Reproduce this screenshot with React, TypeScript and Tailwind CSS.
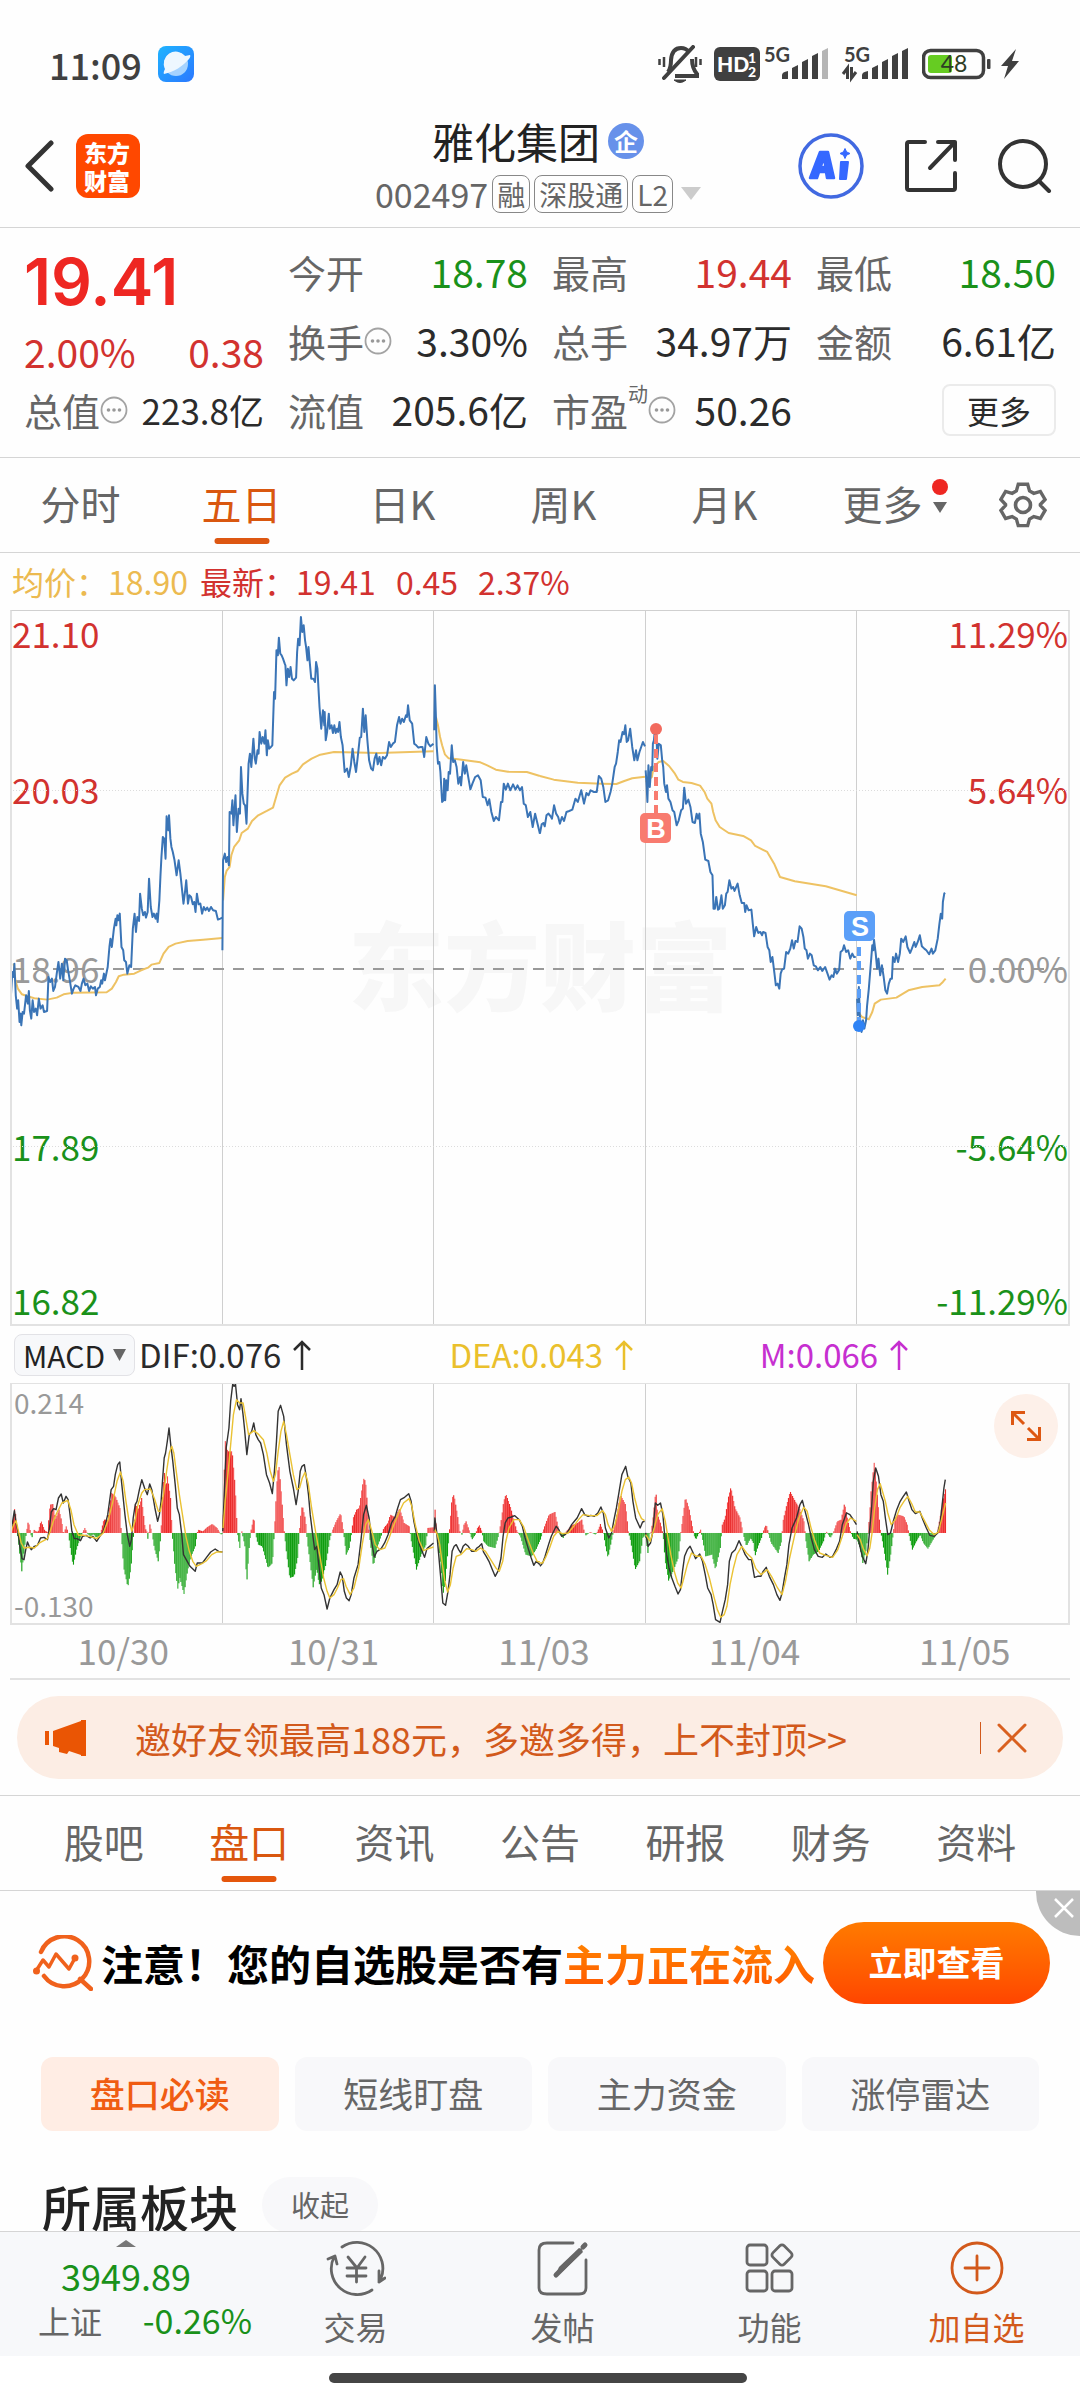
import { useState } from 'react';
import type { ReactNode } from 'react';
import { clsx } from 'clsx';

/* ---------- chart data ---------- */

// Plot units: three per pixel vertically, 3072 across the five sessions.
// The "late" sets start in the second half of the plot.
const LATE_OFFSET = 1568;
const PLOT_SCALE = 'scale(0.3444 0.3333)';

const PRICE_EARLY = [
  '32,1185 36,1115 40,1130 42,1090 46,1185 50,1225 53,1200 57,1265 60,1240 62,1275 66,1235 70,1240 76,1185 81,1210 84,1172 87,1230 91,1255 95,1200 99,1235 104,1225 108,1245 113,1195 118,1225 124,1215 128,1235 137,1232 141,1130 146,1145 151,1135 155,1172 160,1160 165,1120 170,1085 175,1135 180,1090 184,1140 189,1075 194,1080 198,1110 203,1140 209,1180 214,1165 219,1155 228,1160 234,1172 238,1150 243,1135 248,1155 254,1150 259,1172 264,1158 270,1165 276,1160 279,1185 284,1165 290,1160 294,1140 297,1150 302,1120 305,1140 313,1100 318,1040 321,1015 325,1040 331,985 336,955 338,975 341,945 344,960 348,940 353,1040 358,1050 361,1080 366,1085 370,1120 376,1095 381,1100 386,985 391,940 395,995 399,950 404,962 407,880 412,925 416,945 421,935 424,952 429,935 433,835 438,920 443,950 447,940 452,955 455,940 458,965 463,900 466,830 469,770 473,710 477,715 481,775 484,648 489,690 491,645 495,715 498,740 502,755 507,780 513,825 519,780 524,820 528,860 533,910 538,870 541,840 546,910 550,885 555,890 560,912 564,905 568,935 572,880 577,912 582,910 587,940 592,920 597,930 602,922 607,932 613,920 619,930 627,932 633,958 640,955 646,952',
  '646,1050 648,780 653,760 657,785 661,770 665,795 667,635 672,640 675,600 678,675 684,585 688,695 693,625 697,640 700,500 704,580 708,610 712,615 716,670 722,490 726,460 730,500 736,415 740,475 743,490 748,450 751,460 754,395 759,430 763,410 768,430 771,390 775,465 778,420 782,445 787,440 791,435 796,275 799,295 803,150 807,165 810,112 814,160 818,165 822,175 827,190 829,195 832,255 836,205 840,230 844,200 848,235 853,240 860,232 863,155 866,115 870,135 874,50 878,95 882,75 886,120 889,140 893,180 896,140 900,190 904,235 910,235 915,245 918,185 922,205 925,265 928,320 933,385 938,330 942,375 943,335 946,420 950,395 955,340 958,385 963,375 967,398 971,375 975,398 979,385 982,395 986,365 990,410 995,435 1001,515 1008,505 1013,530 1019,495 1024,445 1029,485 1034,515 1039,470 1045,412 1049,410 1054,325 1058,395 1062,345 1067,420 1072,480 1078,505 1083,510 1088,475 1093,460 1097,492 1102,470 1107,495 1112,470 1118,475 1124,465 1130,425 1135,440 1141,430 1147,425 1153,375 1159,350 1163,370 1168,355 1173,365 1179,345 1182,350 1185,315 1190,360 1197,370 1203,430 1209,435 1215,442 1222,440 1227,440 1232,470 1238,410 1244,430 1250,438 1259,430',
  '1261,390 1263,255 1266,350 1268,435 1272,490 1276,485 1279,515 1284,605 1288,600 1290,535 1293,600 1296,540 1300,570 1303,515 1307,520 1312,435 1316,485 1321,480 1326,500 1331,550 1336,530 1339,555 1345,485 1350,520 1354,495 1359,525 1366,567 1372,550 1380,530 1388,525 1396,540 1402,590 1410,592 1416,615 1421,597 1427,635 1434,662 1440,650 1449,660 1455,605 1459,605 1463,550 1469,568 1475,550 1482,570 1490,552 1497,568 1503,555 1510,570 1516,560 1521,610 1527,615 1533,650 1540,635 1547,680 1554,640 1561,670 1568,700',
];
const PRICE_LATE = [
  '0,700 5,672 10,668 14,678 19,645 25,640 31,648 35,655 41,615 47,640 53,650 58,670 64,650 70,662 77,635 85,632 94,628 103,595 110,605 120,570 128,610 135,578 141,585 147,570 157,575 165,575 171,527 178,535 184,560 190,605 198,600 205,575 210,550 217,500 221,490 226,455 230,420 234,425 240,395 244,402 248,375 252,425 256,420 262,385 268,440 274,480 279,450 283,480 289,455 294,440 299,425 305,438',
  '307,510 310,560 312,605 315,495 319,560 323,500 326,510 328,430 331,420 334,385 338,400 341,475 345,430 351,435 355,480 358,500 361,550 366,575 369,555 373,595 379,605 385,630 390,635 397,675 403,660 410,630 415,625 419,562 424,610 431,598 437,620 443,665 450,668 455,640 459,655 463,640 467,700 473,725 480,778 489,782 495,815 501,825 504,925 508,925 512,890 517,928 521,925 527,885 531,925 537,915 541,880 545,875 550,840 556,865 561,860 565,872 574,850 580,885 586,908 593,908 596,935 600,915 606,930 614,928 618,970 622,1008 628,980 634,998 640,995 645,1005 648,995 655,998 661,1040 666,1050 670,1085 675,1070 681,1120 685,1155 690,1150 695,1165 699,1120 703,1108 709,1105 715,1055 721,1060 727,1045 732,1020 737,1045 742,1022 748,1025 754,978 760,985 765,1010 769,1045 774,1050 778,1075 784,1060 789,1065 795,1095 801,1098 807,1110 814,1100 820,1112 828,1100 835,1120 841,1138 847,1125 852,1130 857,1105 862,1120 869,1108 873,1055 879,1050 883,1035 889,1055 895,1050 901,1075 907,1060 912,1070 917,1070',
  '921,1195 923,1245 926,1160 929,1250 934,1295 938,1260 942,1285 947,1260 950,1215 955,1165 960,1100 965,1035 968,1050 970,1018 975,1060 979,1105 983,1075 988,1125 993,1095 998,1130 1003,1170 1008,1180 1013,1150 1018,1135 1022,1135 1025,1070 1030,1085 1034,1060 1040,1085 1045,1060 1049,1015 1055,1025 1062,1008 1067,1040 1075,1058 1080,1045 1087,1025 1091,1040 1097,1025 1103,1005 1109,1038 1116,1045 1122,1050 1130,1062 1137,1045 1141,1060 1148,1050 1155,1015 1160,970 1164,940 1168,955 1170,905 1174,880 1176,877',
];
const AVERAGE_EARLY = [
  '40,1090 45,1140 52,1165 64,1182 80,1188 100,1194 137,1198 165,1192 185,1182 215,1177 310,1176 325,1165 337,1145 345,1128 360,1123 390,1120 410,1110 430,1102 440,1093 463,1088 475,1060 490,1040 510,1030 545,1022 590,1018 646,1013',
  '648,900 653,830 658,812 667,800 672,765 680,740 695,720 702,698 720,685 732,662 750,645 775,632 793,622 802,590 812,555 828,532 848,520 865,512 880,492 905,475 930,463 970,455 1100,458 1259,453',
  '1266,350 1272,375 1278,410 1284,435 1292,462 1303,474 1330,477 1395,486 1415,495 1440,508 1475,514 1530,515 1568,527',
];
const AVERAGE_LATE = [
  '0,527 40,538 110,547 180,550 222,551 245,542 268,534 305,529',
  '307,545 325,530 330,500 345,485 358,482 375,497 392,520 402,538 415,545 440,548 465,556 478,575 486,595 498,610 503,635 510,660 522,680 548,698 590,707 613,720 625,737 660,755 680,790 697,830 740,843 830,858 880,873 920,885',
  '923,1235 935,1250 955,1257 965,1235 972,1210 990,1198 1035,1192 1070,1170 1110,1160 1160,1155 1170,1145 1178,1135',
];

const MACD_ZERO = 695;
const HIST_EARLY =
  '32,695 42,615 49,695 62,810 75,695 81,658 87,692 91,712 97,685 103,690 109,692 118,658 129,688 137,692 144,610 153,608 160,655 170,625 178,660 183,700 191,675 197,695 203,740 211,795 222,740 236,700 245,680 253,698 262,705 270,698 276,708 288,705 292,690 300,655 312,655 323,575 334,585 347,620 351,700 358,800 370,858 379,800 385,720 388,680 391,605 400,625 410,590 420,680 425,690 429,720 433,665 440,695 447,740 458,780 466,700 471,560 476,515 480,560 485,525 494,590 499,700 507,800 515,862 521,830 533,878 543,810 552,770 566,735 573,685 588,690 600,678 615,668 629,680 640,700 646,695 647,640 652,415 660,450 673,450 682,560 688,695 695,740 699,680 703,700 710,735 715,850 722,740 727,690 736,645 740,695 748,730 760,735 777,800 790,785 797,660 803,540 808,485 815,570 824,690 830,750 840,830 853,825 863,770 868,700 870,660 876,610 886,655 891,720 900,790 908,858 918,800 925,850 933,840 945,790 957,710 965,685 975,660 988,635 996,690 1004,760 1013,740 1020,695 1024,650 1034,625 1042,620 1050,560 1056,527 1062,555 1067,640 1071,700 1083,795 1095,735 1107,700 1113,680 1125,665 1132,640 1147,648 1159,620 1172,665 1187,675 1193,720 1208,805 1222,760 1236,730 1240,680 1259,678 1262,625 1266,680 1270,720 1278,790 1285,880 1292,840 1300,740 1305,670 1311,590 1317,580 1327,640 1334,690 1340,700 1346,670 1352,660 1362,690 1369,715 1379,700 1385,680 1391,672 1398,690 1403,720 1416,735 1436,740 1447,700 1455,650 1461,600 1468,578 1482,620 1492,660 1500,690 1510,705 1525,760 1542,765 1555,745 1568,715';
const HIST_LATE =
  '0,720 4,700 12,675 25,640 42,632 52,680 57,700 66,710 75,690 90,672 108,665 120,655 127,690 132,702 145,692 160,700 166,690 174,668 182,690 188,730 196,770 204,730 212,690 222,640 232,580 247,610 255,690 262,720 275,805 288,780 297,710 305,700 307,720 312,755 316,700 322,690 328,640 335,565 340,640 350,670 356,700 362,780 372,838 385,810 400,770 407,700 412,660 421,587 432,625 442,680 447,705 452,715 458,700 465,685 469,705 480,765 498,760 508,805 522,740 528,670 536,650 545,590 553,557 565,620 580,650 588,695 598,735 610,710 618,725 623,765 632,735 642,710 650,680 656,670 662,695 670,725 690,755 700,720 704,660 715,610 725,570 740,600 752,620 765,660 771,720 780,780 792,760 808,750 822,720 830,690 842,710 852,690 862,660 873,655 883,605 893,660 900,690 908,712 919,715 928,740 936,785 945,750 950,710 955,650 960,570 970,475 978,580 986,680 993,720 1001,770 1008,820 1017,760 1024,700 1030,650 1038,640 1055,645 1065,670 1072,710 1080,745 1092,720 1103,700 1112,725 1125,742 1140,715 1152,695 1160,650 1168,600 1178,555';
const DIF_EARLY = [
  '32,690 37,660 42,628 47,665 52,690 58,735 64,772 70,775 75,745 80,722 85,735 91,745 100,735 109,732 118,710 128,708 138,715 144,680 149,632 156,622 163,625 170,590 178,578 184,605 192,585 198,595 203,635 209,690 216,712 224,712 234,718 240,705 250,702 262,710 270,705 281,720 290,705 300,690 306,670 313,640 323,565 330,555 335,520 342,490 348,482 353,540 358,590 363,640 370,700 377,735 382,715 387,650 393,610 398,600 405,565 412,535 420,560 428,580 435,548 441,565 450,620 458,660 463,640 468,600 472,540 477,470 481,455 486,420 491,380 496,430 502,480 509,550 515,620 521,640 528,700 533,760 541,775 552,795 567,810 573,785 588,785 600,768 612,752 625,743 635,750 646,752',
  '647,690 652,560 657,440 665,380 670,300 676,248 680,255 684,248 690,310 696,325 700,292 706,340 710,380 717,460 724,400 731,390 737,365 743,400 750,415 757,425 765,460 774,520 783,545 791,577 797,510 803,420 808,330 815,312 824,345 832,430 842,510 852,560 860,610 866,570 872,510 877,495 884,490 890,530 896,580 901,640 907,690 914,745 920,735 927,800 933,860 941,880 950,923 958,890 970,865 979,850 988,812 994,825 1000,870 1006,890 1014,898 1020,880 1028,830 1040,790 1048,720 1056,640 1064,612 1072,650 1079,720 1087,767 1095,750 1107,742 1117,725 1127,700 1137,665 1148,645 1155,620 1163,595 1175,588 1187,577 1194,600 1202,660 1210,700 1220,735 1233,768 1240,742 1259,725',
  '1261,690 1263,650 1268,690 1274,760 1280,830 1286,905 1294,912 1301,870 1307,820 1313,750 1319,735 1325,730 1332,745 1338,755 1345,735 1352,728 1360,735 1370,750 1378,750 1385,740 1392,735 1399,727 1404,752 1412,765 1420,780 1430,805 1438,825 1447,808 1455,770 1461,705 1467,665 1475,650 1485,647 1495,643 1508,655 1517,675 1525,710 1535,745 1542,768 1550,792 1557,780 1568,790',
];
const DIF_LATE = [
  '0,795 8,785 15,765 25,730 33,705 40,690 47,675 55,685 63,705 73,700 82,690 92,670 100,660 108,650 115,635 121,622 130,640 140,645 148,642 158,645 168,635 177,617 184,635 190,680 200,710 208,695 215,655 222,620 230,570 238,520 249,495 255,525 264,545 270,600 278,650 291,680 298,662 304,660',
  '307,695 314,735 321,725 328,690 335,605 342,612 350,605 357,640 362,700 368,760 375,800 383,830 392,855 401,878 408,865 414,810 420,765 428,745 436,735 445,755 452,772 464,758 472,780 480,820 487,860 497,880 503,910 510,955 523,963 530,930 538,895 545,850 550,780 557,755 567,745 578,718 588,740 596,760 606,775 614,775 623,828 632,825 642,825 648,810 657,798 666,825 678,850 688,880 697,897 703,875 710,830 717,790 723,730 732,680 745,650 755,610 762,597 770,630 780,670 788,710 797,745 808,765 820,768 830,758 842,768 850,765 860,745 870,720 878,670 890,635 900,640 910,655 919,670',
  '921,690 928,730 936,765 946,787 952,750 957,690 963,620 968,540 975,500 983,525 990,580 997,600 1003,650 1010,700 1018,695 1026,660 1036,625 1046,600 1055,585 1064,572 1072,600 1080,625 1090,637 1103,630 1112,655 1122,680 1132,702 1145,705 1155,695 1162,665 1168,610 1173,560 1177,535',
];
const DEA_EARLY = [
  '32,692 40,670 47,658 54,690 62,725 70,740 85,738 100,740 115,725 138,712 146,690 155,660 165,635 180,605 197,597 206,625 215,670 228,702 245,702 262,706 281,712 300,695 315,655 328,600 340,540 350,512 358,540 366,600 375,660 383,690 392,660 402,605 412,575 420,565 437,563 448,590 460,630 466,630 475,580 484,510 492,455 499,435 505,455 512,510 521,580 530,640 540,705 550,750 560,780 570,795 585,788 600,778 615,760 630,752 646,752',
  '648,680 654,600 662,520 670,430 678,340 687,295 696,305 706,305 713,345 722,400 738,388 752,400 765,415 775,455 785,510 794,540 800,520 808,450 816,390 824,360 832,400 842,460 852,520 862,565 870,560 878,530 886,513 895,545 905,620 918,700 930,770 940,830 950,870 958,890 970,880 980,860 990,835 998,832 1005,855 1017,880 1028,860 1042,800 1052,730 1062,670 1070,655 1080,690 1090,730 1103,745 1118,740 1130,710 1142,675 1158,635 1172,605 1188,592 1196,615 1206,670 1218,720 1230,748 1245,742 1259,737',
  '1263,685 1270,700 1277,730 1285,790 1292,840 1300,872 1308,850 1316,800 1325,765 1338,760 1355,742 1370,745 1382,750 1395,740 1410,750 1425,775 1440,800 1450,810 1460,780 1468,725 1478,680 1492,655 1508,655 1520,675 1535,720 1548,755 1560,780 1568,782',
];
const DEA_LATE = [
  '0,785 8,785 18,765 28,740 40,705 52,690 65,697 82,695 98,675 112,655 125,640 145,643 165,643 182,628 190,640 198,670 208,690 218,670 228,625 238,570 248,535 258,527 266,545 275,590 285,630 295,652 304,658',
  '307,700 320,720 332,680 342,640 355,622 364,660 372,710 380,760 390,810 400,845 410,860 418,830 428,790 440,755 455,765 468,765 480,790 492,830 505,885 515,925 525,948 535,940 543,915 552,850 562,800 572,760 586,735 600,755 615,770 627,802 642,820 660,805 675,830 690,860 703,880 713,840 725,770 740,700 752,650 766,618 776,630 786,675 797,715 812,755 830,762 850,768 865,745 878,705 890,665 902,650 919,660',
  '921,700 930,715 940,745 950,763 958,740 965,690 972,620 980,565 988,547 996,575 1003,600 1010,635 1020,670 1032,655 1045,620 1057,600 1068,585 1080,608 1090,632 1103,632 1115,655 1130,685 1145,700 1157,692 1166,655 1178,605',
];

const parse = (s: string) => s.split(' ').map((p) => p.split(',').map(Number));

function buildBars() {
  const pts = [
    ...parse(HIST_EARLY),
    ...parse(HIST_LATE).map(([x, y]) => [x + LATE_OFFSET, y]),
  ];
  const bars: { x: number; y: number }[] = [];
  let i = 0;
  for (let x = pts[0][0]; x <= pts[pts.length - 1][0]; x += 3) {
    while (i < pts.length - 2 && pts[i + 1][0] < x) i++;
    const [x0, y0] = pts[i];
    const [x1, y1] = pts[i + 1];
    const t = x1 === x0 ? 0 : (x - x0) / (x1 - x0);
    bars.push({ x, y: y0 + (y1 - y0) * Math.min(1, t) });
  }
  return bars;
}
const BARS = buildBars();

const DAYS = ['10/30', '10/31', '11/03', '11/04', '11/05'];
const PERIODS = ['分时', '五日', '日K', '周K', '月K'];
const SECTIONS = ['股吧', '盘口', '资讯', '公告', '研报', '财务', '资料'];
const TOPICS = ['盘口必读', '短线盯盘', '主力资金', '涨停雷达'];

const RED = 'text-[#d2322f]';
const GREEN = 'text-[#1a911a]';

function Series({
  early,
  late,
  color,
  width,
}: {
  early: string[];
  late: string[];
  color: string;
  width: number;
}) {
  return (
    <g
      fill="none"
      stroke={color}
      strokeWidth={width}
      strokeLinejoin="round"
    >
      {early.map((points) => (
        <polyline key={points} points={points} vectorEffect="non-scaling-stroke" />
      ))}
      <g transform={`translate(${LATE_OFFSET} 0)`}>
        {late.map((points) => (
          <polyline key={points} points={points} vectorEffect="non-scaling-stroke" />
        ))}
      </g>
    </g>
  );
}

/* ---------- small pieces ---------- */

function MoreDots() {
  return (
    <svg viewBox="0 0 28 28" className="size-7 shrink-0" aria-hidden>
      <circle cx="14" cy="14" r="12.5" fill="none" stroke="#a3a3a3" strokeWidth="1.8" />
      <circle cx="8.5" cy="14" r="1.8" fill="#999" />
      <circle cx="14" cy="14" r="1.8" fill="#999" />
      <circle cx="19.5" cy="14" r="1.8" fill="#999" />
    </svg>
  );
}

function Quote({
  label,
  value,
  tone = 'text-[#2b2b2b]',
  small,
  children,
}: {
  label: string;
  value: string;
  tone?: string;
  small?: boolean;
  children?: ReactNode;
}) {
  return (
    <div className="flex items-center justify-between whitespace-nowrap">
      <span className="flex items-center text-[38px] text-[#666]">
        {label}
        {children}
      </span>
      <span className={clsx(small ? 'text-[35px]' : 'text-[39px]', tone)}>{value}</span>
    </div>
  );
}

function Signal({ x, weak }: { x: number; weak?: boolean }) {
  return (
    <g fill="#404040">
      <path d={`M${x} 34v-4q0-3 6-4v8z`} />
      <path d={`M${x + 10} 34v-11l6-3v14z`} />
      <path d={`M${x + 20} 34v-17l6-3v20z`} />
      <path d={`M${x + 30} 34v-23l6-3v26z`} />
      <path d={`M${x + 40} 34v-28l6-3v31z`} fill={weak ? '#b5b5b5' : '#404040'} />
    </g>
  );
}

function StatusBar() {
  return (
    <div className="flex h-26 items-center justify-between pt-6 pr-[60px] pl-[49px]">
      <div className="flex items-center gap-4">
        <span className="text-[36px] leading-10 font-medium text-[#404040]">11:09</span>
        <svg viewBox="0 0 36 36" className="size-9" aria-hidden>
          <defs>
            <linearGradient id="planet" x1="0" y1="0" x2="1" y2="1">
              <stop offset="0" stopColor="#1fb4ff" />
              <stop offset="1" stopColor="#2b78ff" />
            </linearGradient>
          </defs>
          <rect width="36" height="36" rx="8" fill="url(#planet)" />
          <circle cx="18" cy="18" r="12" fill="#a5d3ff" />
          <path d="M7 23A12 12 0 0 1 27 10l5-1q1 1-1 4C25 20 16 26 6 28q-1-1 1-5z" fill="#eef7ff" />
        </svg>
      </div>
      <div className="flex items-center">
        <svg viewBox="0 0 44 38" className="mr-3 h-[38px] w-11" fill="none" stroke="#404040" aria-hidden>
          <path d="M10 27q3-4 3-12 1-12 10-12 5 0 8 4M34 14q0 9 5 15v2H17" strokeWidth="4" />
          <path d="M6 33 35 2" strokeWidth="4" strokeLinecap="round" />
          <path d="M16 35h12q-6 5-12 0z" fill="#404040" strokeWidth="1" />
          <path d="M1.500 14v6M6 12v10M38 12v10M42.500 14v6" strokeWidth="2.500" />
        </svg>
        <svg viewBox="0 0 46 34" className="mr-1 h-[34px] w-[46px] overflow-visible" aria-hidden>
          <rect width="46" height="34" rx="6" fill="#404040" />
          <g fill="#fff" className="font-['Lato'] font-black">
            <text x="3" y="25" fontSize="21">HD</text>
            <text x="34" y="16" fontSize="14">1</text>
            <text x="34" y="30" fontSize="14">2</text>
          </g>
        </svg>
        <svg viewBox="0 0 66 38" className="mr-3 h-[38px] w-[66px] overflow-visible" aria-hidden>
          <text x="0" y="17" fontSize="20" fill="#404040" className="font-['Lato'] font-bold">5G</text>
          <Signal x={18} weak />
        </svg>
        <svg viewBox="0 0 68 38" className="mr-3 h-[38px] w-[68px] overflow-visible" aria-hidden>
          <text x="2" y="17" fontSize="20" fill="#404040" className="font-['Lato'] font-bold">5G</text>
          <path d="M1 29 5.500 23v11M14 27 9.500 33V22" fill="none" stroke="#404040" strokeWidth="3" />
          <Signal x={20} />
        </svg>
        <svg viewBox="0 0 70 32" className="mr-2 h-8 w-[70px]" aria-hidden>
          <rect x="1.500" y="2.500" width="60" height="27" rx="7" fill="none" stroke="#404040" strokeWidth="3.500" />
          <rect x="6" y="7" width="24" height="18" rx="3" fill="#66cc22" />
          <rect x="65" y="11" width="3.500" height="10" rx="1" fill="#404040" />
          <text x="32" y="24" fontSize="23" textAnchor="middle" fill="#2d3d24" className="font-['Lato']">48</text>
        </svg>
        <svg viewBox="0 0 20 30" className="h-[30px] w-5" fill="#404040" aria-hidden>
          <path d="M16 0 1 17h7L4 30 19 12h-7z" />
        </svg>
      </div>
    </div>
  );
}

function Tag({ children }: { children: ReactNode }) {
  return (
    <span className="flex h-[38px] items-center rounded-lg border border-[#888] px-1 text-[28px] leading-none">
      {children}
    </span>
  );
}

function Header() {
  return (
    <header className="grid h-[124px] grid-cols-[1fr_auto_1fr] items-center border-b border-[#d5d5d5] pr-7 pl-6 text-[#333]">
      <div className="flex items-center gap-5">
        <button type="button" aria-label="返回">
          <svg viewBox="0 0 32 52" className="h-13 w-8" fill="none" stroke="#333" strokeWidth="5" strokeLinecap="round" strokeLinejoin="round">
            <path d="M27 3 4 26l23 23" />
          </svg>
        </button>
        <a
          href="#home"
          className="grid size-16 place-items-center rounded-xl bg-[#ff4800] px-2 text-[23px] leading-7 font-black break-all text-white"
        >
          东方财富
        </a>
      </div>
      <div className="flex flex-col items-center gap-3">
        <h1 className="flex items-center gap-2 text-[42px] leading-[44px] text-[#222]">
          雅化集团
          <span className="grid size-9 place-items-center rounded-full bg-[#6791ea] text-[24px] leading-none font-bold text-white">
            企
          </span>
        </h1>
        <button type="button" className="flex items-center gap-1 text-[#666]">
          <span className="text-[34px] leading-none">002497</span>
          <Tag>融</Tag>
          <Tag>深股通</Tag>
          <Tag>L2</Tag>
          <svg viewBox="0 0 20 13" className="ml-1 h-[13px] w-5" fill="#ccc" aria-hidden>
            <path d="M0 0h20L10 13z" />
          </svg>
        </button>
      </div>
      <div className="flex items-center justify-end gap-10">
        <button type="button" aria-label="AI 助手">
          <svg viewBox="0 0 66 66" className="size-[66px]">
            <circle cx="33" cy="33" r="31" fill="none" stroke="#4169e1" strokeWidth="3.500" />
            <g fill="#3568ff" stroke="#3568ff" strokeLinejoin="round">
              <path
                fillRule="evenodd"
                strokeWidth="2.500"
                d="M22 19h8l6 26h-7l-1-6h-7l-2 6h-7zM26 25l-3.500 9h5z"
              />
              <path strokeWidth="2" d="M43 29h7l-2 17h-6z" />
              <path strokeWidth="1" d="M47 15.500l1.600 3.400L52 20.500l-3.400 1.600L47 25.500l-1.600-3.400L42 20.500l3.400-1.600z" />
            </g>
          </svg>
        </button>
        <button type="button" aria-label="分享">
          <svg viewBox="0 0 54 54" className="size-[54px]" fill="none" stroke="#333" strokeWidth="4" strokeLinecap="round" strokeLinejoin="round">
            <path d="M21 3H5q-2 0-2 2v44q0 2 2 2h44q2 0 2-2V34M34 3h17v18M51 3 26 29" />
          </svg>
        </button>
        <button type="button" aria-label="搜索">
          <svg viewBox="0 0 54 54" className="size-[54px]" fill="none" stroke="#333" strokeWidth="4" strokeLinecap="round">
            <circle cx="25" cy="25" r="23" />
            <path d="m42 43 9 9" />
          </svg>
        </button>
      </div>
    </header>
  );
}

function QuotePanel() {
  return (
    <section className="grid auto-rows-[69px] grid-cols-4 gap-x-6 border-b border-[#d5d5d5] px-6 pt-[9px] pb-[13px] leading-none">
      <div className="row-span-2">
        <div className="flex h-[90px] items-center text-[64px] font-semibold text-[#ee2722] font-['Inter']">
          19.41
        </div>
        <div className={clsx('flex h-12 items-center justify-between text-[39px]', RED)}>
          <span>2.00%</span>
          <span>0.38</span>
        </div>
      </div>
      <Quote label="今开" value="18.78" tone={GREEN} />
      <Quote label="最高" value="19.44" tone={RED} />
      <Quote label="最低" value="18.50" tone={GREEN} />
      <Quote label="换手" value="3.30%">
        <MoreDots />
      </Quote>
      <Quote label="总手" value="34.97万" />
      <Quote label="金额" value="6.61亿" />
      <Quote label="总值" value="223.8亿" small>
        <MoreDots />
      </Quote>
      <Quote label="流值" value="205.6亿" />
      <Quote label="市盈" value="50.26">
        <sup className="-top-4 text-[20px]">动</sup>
        <MoreDots />
      </Quote>
      <div className="flex items-center justify-end">
        <button
          type="button"
          className="h-[52px] w-[114px] rounded-lg border-2 border-[#ebebeb] text-[32px] text-[#2b2b2b]"
        >
          更多
        </button>
      </div>
    </section>
  );
}

function PeriodTabs() {
  const [active, setActive] = useState('五日');
  return (
    <nav className="grid h-[95px] grid-cols-[repeat(6,1fr)_114px] border-b border-[#d5d5d5] text-[40px] text-[#666]">
      {PERIODS.map((name) => (
        <button
          key={name}
          type="button"
          onClick={() => setActive(name)}
          className={clsx('relative pb-1', active === name && 'text-[#d9570f]')}
        >
          {name}
          {active === name && (
            <span className="absolute bottom-2 left-1/2 h-1.5 w-[55px] -translate-x-1/2 rounded-full bg-[#dd5712]" />
          )}
        </button>
      ))}
      <button type="button" className="flex items-center justify-center gap-2 pb-1 pl-5">
        更多
        <svg viewBox="0 0 18 36" className="mb-3 h-9 w-[18px]" aria-hidden>
          <circle cx="9" cy="8" r="8" fill="#ee2722" />
          <path d="M2 23h14l-7 11z" fill="#666" />
        </svg>
      </button>
      <button type="button" aria-label="设置" className="grid place-items-center">
        <svg viewBox="0 0 48 48" className="size-12" fill="none" stroke="#666" strokeWidth="3.600">
          <path d="M19 2h10l2 7 4.500 2.600 7-2 5 8.600-5 5.300v1l5 5.300-5 8.600-7-2L31 39l-2 7H19l-2-7-4.500-2.600-7 2-5-8.600 5-5.300v-1l-5-5.300 5-8.600 7 2L17 9z" transform="translate(1.400 1.400) scale(.94)" />
          <circle cx="24" cy="24" r="7.500" />
        </svg>
      </button>
    </nav>
  );
}

function SessionLines({ height }: { height: number }) {
  return (
    <g stroke="#cfcfcf" strokeWidth="1">
      {[209.5, 420.5, 632.5, 843.5].map((x) => (
        <path key={x} d={`M${x} 0V${height}`} />
      ))}
    </g>
  );
}

function PriceChart() {
  return (
    <div className="relative mx-[10px] border-x-2 border-t border-b-2 border-t-[#d0d0d0] border-[#e2e2e2]">
      <div className="absolute inset-0 grid place-items-center pb-3 text-[96px] leading-none font-black text-[#f7f7f7]">
        东方财富
      </div>
      <div className="absolute inset-0 text-[35px] leading-9">
        <div className={clsx('absolute inset-x-0 top-1 flex justify-between', RED)}>
          <span>21.10</span>
          <span>11.29%</span>
        </div>
        <div className={clsx('absolute inset-x-0 top-1/4 flex -translate-y-1/2 justify-between', RED)}>
          <span>20.03</span>
          <span>5.64%</span>
        </div>
        <div className="absolute inset-x-0 top-1/2 flex -translate-y-1/2 justify-between text-[#999]">
          <span>18.96</span>
          <span>0.00%</span>
        </div>
        <div className={clsx('absolute inset-x-0 top-3/4 flex -translate-y-1/2 justify-between', GREEN)}>
          <span>17.89</span>
          <span>-5.64%</span>
        </div>
        <div className={clsx('absolute inset-x-0 bottom-1.5 flex justify-between', GREEN)}>
          <span>16.82</span>
          <span>-11.29%</span>
        </div>
      </div>
      <svg viewBox="0 0 1056 713" className="relative block h-auto w-full" role="img" aria-label="五日走势">
        <g transform="translate(1 0)">
          <SessionLines height={713} />
          <path d="M0 179.500H1054M0 535.500H1054" stroke="#dcdcdc" strokeDasharray="1 2" />
          <path d="M0 358H1054" stroke="#999" strokeWidth="2" strokeDasharray="11 9" />
          <g transform={`${PLOT_SCALE} translate(-38 -32)`}>
            <Series early={AVERAGE_EARLY} late={AVERAGE_LATE} color="#eec263" width={2} />
            <Series early={PRICE_EARLY} late={PRICE_LATE} color="#3a74b6" width={2} />
          </g>
          <g className="font-['Liberation_Sans'] font-bold" fontSize="27" textAnchor="middle">
            <path d="M643 124v80" stroke="#f87b6f" strokeWidth="4" strokeDasharray="9 5" />
            <circle cx="643" cy="118" r="6" fill="#f26a5e" />
            <rect x="627" y="202" width="31" height="30" rx="5" fill="#f87b6f" />
            <text x="643" y="227" fill="#fff">B</text>
            <path d="M846 336v76" stroke="#5b9ff8" strokeWidth="4" strokeDasharray="9 5" />
            <circle cx="846" cy="415" r="6" fill="#2f83f5" />
            <rect x="831" y="300" width="31" height="30" rx="5" fill="#5b9ff8" />
            <text x="847" y="325" fill="#fff">S</text>
          </g>
        </g>
      </svg>
    </div>
  );
}

function Reading({ text, tone }: { text: string; tone: string }) {
  return (
    <span className={clsx('flex flex-1 items-center gap-3', tone)}>
      {text}
      <svg viewBox="0 0 18 30" className="h-[30px] w-[18px]" fill="none" stroke="currentColor" strokeWidth="2.500" aria-hidden>
        <path d="M9 30V2M1 10l8-8 8 8" />
      </svg>
    </span>
  );
}

function MacdChart() {
  return (
    <section className="px-[10px]">
      <div className="flex h-[57px] items-center text-[33px] leading-none">
        <button
          type="button"
          className="mr-1 ml-1 flex h-[42px] items-center gap-2 rounded-lg border border-[#e2e2e6] bg-[#f7f8fa] px-2 text-[30px] text-[#222]"
        >
          MACD
          <svg viewBox="0 0 13 12" className="h-3 w-[13px]" fill="#666" aria-hidden>
            <path d="M0 0h13L6.500 12z" />
          </svg>
        </button>
        <Reading text="DIF:0.076" tone="text-[#2b2b2b]" />
        <Reading text="DEA:0.043" tone="text-[#eac02c]" />
        <Reading text="M:0.066" tone="text-[#c62fd0]" />
      </div>
      <div className="relative border-x-2 border-t border-b-2 border-[#e2e2e2]">
        <div className="absolute inset-0 flex flex-col justify-between px-0.5 py-0.5 text-[28px] leading-8 text-[#999]">
          <span>0.214</span>
          <span>-0.130</span>
        </div>
        <svg viewBox="0 0 1056 239" className="relative block h-auto w-full" role="img" aria-label="MACD">
          <g transform="translate(1 0)">
            <SessionLines height={239} />
            <g transform={`${PLOT_SCALE} translate(-38 -248)`}>
              {BARS.map(({ x, y }, i) => {
                const up = y < MACD_ZERO;
                const fills = up ? ['#ea2a2a', '#f65050'] : ['#0f9c0f', '#35b035'];
                return (
                  <rect
                    key={x}
                    x={x}
                    y={Math.min(y, MACD_ZERO)}
                    width="3.200"
                    height={Math.abs(y - MACD_ZERO)}
                    fill={fills[i % 2]}
                  />
                );
              })}
              <Series early={DIF_EARLY} late={DIF_LATE} color="#333" width={1.4} />
              <Series early={DEA_EARLY} late={DEA_LATE} color="#eac233" width={1.4} />
            </g>
          </g>
        </svg>
        <button
          type="button"
          aria-label="全屏"
          className="absolute top-2.5 right-2.5 grid size-16 place-items-center rounded-full bg-[#fdf0e9]"
        >
          <svg viewBox="0 0 32 32" className="size-8" fill="none" stroke="#dd5712" strokeWidth="3">
            <path d="M2.500 15V2.500H15M3 3l11 11M17 29.500h12.500V17M29 29 18 18" />
          </svg>
        </button>
      </div>
      <div className="grid h-[55px] grid-cols-5 items-center border-b-2 border-[#e2e2e2] pb-1 pl-2 text-center text-[35px] leading-none text-[#999]">
        {DAYS.map((day) => (
          <span key={day}>{day}</span>
        ))}
      </div>
    </section>
  );
}

function InviteBanner() {
  return (
    <div className="mx-[17px] mt-4 mb-4 flex h-[83px] items-center rounded-full bg-[#fcede4] pr-9 pl-7 text-[#d2591b]">
      <svg viewBox="0 0 42 38" className="h-[38px] w-[42px]" fill="#ea5504" aria-hidden>
        <path d="M0 12h4v14H0zM8 12 36 2V1h5v36h-5v-1l-12-4-2 3-8-2v-4l-6-2z" />
      </svg>
      <a href="#invite" className="ml-12 flex-1 text-[36px] leading-none">
        邀好友领最高188元，多邀多得，上不封顶&gt;&gt;
      </a>
      <span className="mr-4 h-8 w-px bg-[#d2591b]" />
      <button type="button" aria-label="关闭">
        <svg viewBox="0 0 30 30" className="size-[30px]" fill="none" stroke="#d9601f" strokeWidth="3" strokeLinecap="round">
          <path d="m2 2 26 26M28 2 2 28" />
        </svg>
      </button>
    </div>
  );
}

function SectionTabs() {
  const [active, setActive] = useState('盘口');
  return (
    <nav className="grid h-24 grid-cols-7 border-y border-[#d5d5d5] px-[31px] text-[40px] text-[#666]">
      {SECTIONS.map((name) => (
        <button
          key={name}
          type="button"
          onClick={() => setActive(name)}
          className={clsx('relative pb-1', active === name && 'text-[#d9570f]')}
        >
          {name}
          {active === name && (
            <span className="absolute bottom-2 left-1/2 h-1.5 w-[55px] -translate-x-1/2 rounded-full bg-[#e4560c]" />
          )}
        </button>
      ))}
    </nav>
  );
}

function FlowAd() {
  return (
    <section className="relative flex h-[144px] items-center gap-2 overflow-hidden pr-[30px] pl-[33px] whitespace-nowrap">
      <svg viewBox="0 0 60 56" className="h-14 w-[60px] shrink-0" fill="none" stroke="#f0611c" strokeWidth="4.500" strokeLinecap="round" strokeLinejoin="round" aria-hidden>
        <path d="M8 17A25 25 0 1 1 11 41" />
        <path d="m47 44 11 10" />
        <path d="m3 36 7-11 6 7 7-13 13 15 6-11" strokeWidth="3.500" />
        <g fill="#f0611c" stroke="none">
          <circle cx="3.500" cy="36" r="3.500" />
          <circle cx="42" cy="23" r="3.500" />
        </g>
      </svg>
      <p className="flex-1 text-[42px] leading-none font-bold text-black">
        注意！您的自选股是否有
        <span className="bg-gradient-to-b from-[#ff8a00] to-[#ff5200] bg-clip-text text-transparent">
          主力正在流入
        </span>
      </p>
      <button
        type="button"
        className="h-[82px] w-[228px] rounded-full bg-gradient-to-b from-[#ff7a00] to-[#ff4400] pb-1 text-[34px] font-bold text-white"
      >
        立即查看
      </button>
      <button
        type="button"
        aria-label="关闭广告"
        className="absolute top-0 right-0 grid h-[45px] w-11 place-items-center rounded-bl-full bg-[#bdbdbd] pb-3 pl-3"
      >
        <svg viewBox="0 0 20 20" className="size-5" fill="none" stroke="#fff" strokeWidth="2.500">
          <path d="m1 1 18 18M19 1 1 19" />
        </svg>
      </button>
    </section>
  );
}

function NavItem({ label, tone, children }: { label: string; tone?: string; children: ReactNode }) {
  return (
    <a
      href={`#${label}`}
      className={clsx('flex flex-1 flex-col items-center gap-3.5 pt-2 text-[32px] leading-none', tone ?? 'text-[#666]')}
    >
      <svg viewBox="0 0 60 56" className="h-14 w-[60px]" fill="none" stroke="currentColor" strokeWidth="2.800" strokeLinecap="round" strokeLinejoin="round" aria-hidden>
        {children}
      </svg>
      {label}
    </a>
  );
}

function BottomBar() {
  return (
    <footer className="bg-white">
      <nav className="flex h-[125px] border-t border-[#d5d5d5] bg-[#f7f8fa]">
        <a href="#index" className="flex w-[252px] flex-col items-center pt-2 leading-none">
          <svg viewBox="0 0 20 7" className="h-[7px] w-5" fill="#777" aria-hidden>
            <path d="M10 0 20 7H0z" />
          </svg>
          <span className={clsx('mt-2.5 text-[36px]', GREEN)}>3949.89</span>
          <span className="mt-2.5 flex w-full items-center justify-between pl-[38px] text-[32px] text-[#666]">
            上证
            <span className={clsx('text-[34px]', GREEN)}>-0.26%</span>
          </span>
        </a>
        <NavItem label="交易">
          <path d="M16 7A26 26 0 0 1 55 38l-2 4M53 42l6-4M53 42V31" />
          <path d="M46 50A26 26 0 0 1 8 17M2 19l7-3 2 8" />
          <path d="m22 17 9 11 8-11M21 28h19M21 36h19M30.500 28v14" />
        </NavItem>
        <NavItem label="发帖">
          <path d="M40 3H14q-8 0-8 7v38q0 6 8 6h32q7 0 7-6V20" />
          <path d="m23 34 3-7L46 8l4 4-20 19z" fill="currentColor" stroke="none" />
          <path d="m23 35 24-24M50 7l2-2" strokeWidth="5" />
        </NavItem>
        <NavItem label="功能">
          <rect x="7" y="5" width="20" height="20" rx="3" />
          <rect x="7" y="31" width="20" height="20" rx="3" />
          <rect x="32" y="31" width="20" height="20" rx="3" />
          <rect x="34" y="7" width="16" height="16" rx="3" transform="rotate(45 42 15)" />
        </NavItem>
        <NavItem label="加自选" tone="text-[#d2591b]">
          <circle cx="30" cy="28" r="25" />
          <path d="M30 16v24M18 28h24" />
        </NavItem>
      </nav>
      <div className="flex h-11 items-center justify-center pr-1">
        <span className="h-2.5 w-[418px] rounded-full bg-[#454545]" />
      </div>
    </footer>
  );
}

export default function App() {
  const [topic, setTopic] = useState('盘口必读');

  return (
    <div className="flex h-screen flex-col overflow-hidden bg-[#fefefe] font-['Noto_Sans_CJK_SC',sans-serif]">
      <StatusBar />
      <Header />
      <main className="min-h-0 flex-1 overflow-hidden">
        <QuotePanel />
        <PeriodTabs />
        <div className={clsx('flex h-[57px] items-center gap-5 px-3 pb-0.5 text-[32px] leading-none', RED)}>
          <span className="-mr-2 text-[#ecba50]">均价：18.90</span>
          <span>最新：19.41</span>
          <span>0.45</span>
          <span>2.37%</span>
        </div>
        <PriceChart />
        <MacdChart />
        <InviteBanner />
        <SectionTabs />
        <FlowAd />
        <div className="grid grid-cols-4 gap-4 px-[41px] pt-[22px]">
          {TOPICS.map((name) => (
            <button
              key={name}
              type="button"
              onClick={() => setTopic(name)}
              className={clsx(
                'h-[74px] rounded-xl pb-0.5 text-[35px]',
                topic === name
                  ? 'bg-[#ffede4] font-medium text-[#f05c12]'
                  : 'bg-[#f8f8fa] text-[#666]',
              )}
            >
              {name}
            </button>
          ))}
        </div>
        <div className="mt-[46px] flex items-center gap-6 px-[42px]">
          <h2 className="text-[49px] leading-none font-medium text-[#222]">所属板块</h2>
          <button type="button" className="h-14 w-[116px] rounded-full bg-[#f8f8fa] text-[29px] text-[#666]">
            收起
          </button>
        </div>
      </main>
      <BottomBar />
    </div>
  );
}
